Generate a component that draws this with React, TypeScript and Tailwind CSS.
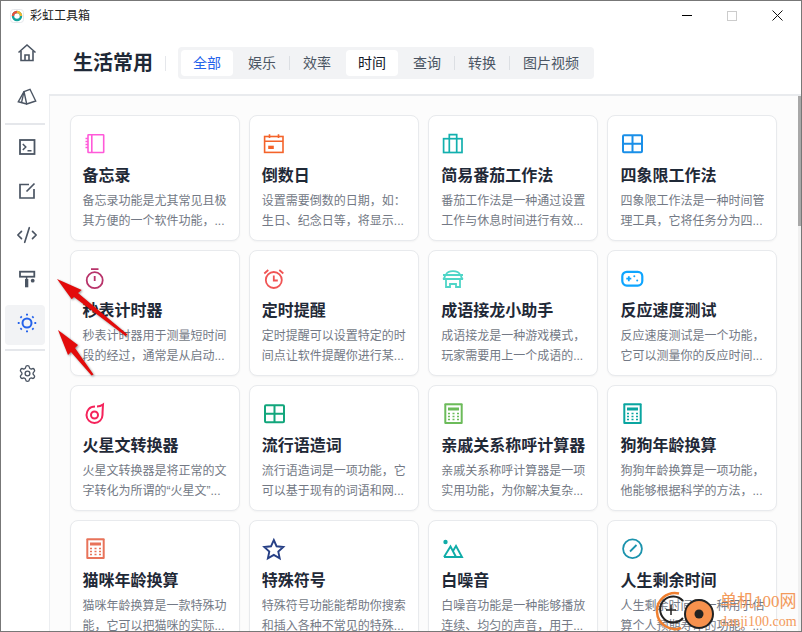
import { CodeXml, Settings } from "lucide-react";
import type { ReactNode } from "react";

const tabs = ["全部", "娱乐", "效率", "时间", "查询", "转换", "图片视频"];

function Calc({ c }: { c: string }) {
  return (
    <svg width="24" height="24" viewBox="0 0 24 24" fill="none">
      <rect x="3.300" y="1.300" width="18.400" height="20.700" rx="1" fill={c} />
      <rect x="5.300" y="3.300" width="14.400" height="16.700" fill="#fff" />
      <rect x="7" y="5.500" width="11" height="3" fill={c} />
      <path d="M7 11.500h2M11.500 11.500h2M16 11.500h2M7 14.500h2M11.500 14.500h2M16 14.500h2M7 17.500h2M11.500 17.500h2M16 17.500h2" stroke={c} strokeWidth="1.600" />
    </svg>
  );
}

function Grid({ c }: { c: string }) {
  return (
    <svg width="24" height="24" viewBox="0 0 24 24" fill="none" stroke={c} strokeWidth="2">
      <rect x="3" y="3.200" width="19" height="17" rx="1" />
      <path d="M3 11.700h19M12.500 3.200v17" />
    </svg>
  );
}

const cards: { title: string; desc: string; icon: ReactNode }[] = [
  {
    title: "备忘录",
    desc: "备忘录功能是尤其常见且极其方便的一个软件功能，...",
    icon: (
      <svg width="24" height="24" viewBox="0 0 24 24" fill="none" stroke="#ff5ad9" strokeWidth="1.600">
        <rect x="5" y="2.800" width="15.700" height="17.700" rx="0.500" />
        <path d="M8.800 2.800v17.700M2.500 6.500H5M2.500 9.500H5M2.500 12.500H5M2.500 15.500H5" />
      </svg>
    ),
  },
  {
    title: "倒数日",
    desc: "设置需要倒数的日期，如：生日、纪念日等，将显示...",
    icon: (
      <svg width="24" height="24" viewBox="0 0 24 24" fill="none" stroke="#f4632a" strokeWidth="1.600">
        <rect x="2.600" y="4.500" width="18.400" height="15.900" />
        <path d="M2.600 9.300H21M7.500 2.300V6M16.500 2.300V6" />
        <rect x="6.200" y="13.700" width="5.600" height="3.300" fill="#f4632a" stroke="none" />
      </svg>
    ),
  },
  {
    title: "简易番茄工作法",
    desc: "番茄工作法是一种通过设置工作与休息时间进行有效...",
    icon: (
      <svg width="24" height="24" viewBox="0 0 24 24" fill="none" stroke="#13b0ae" strokeWidth="1.700">
        <rect x="2.600" y="6.700" width="18.400" height="13.800" />
        <path d="M8.300 20.500V2.700h7.400v17.800" />
      </svg>
    ),
  },
  {
    title: "四象限工作法",
    desc: "四象限工作法是一种时间管理工具，它将任务分为四...",
    icon: <Grid c="#1a8fe8" />,
  },
  {
    title: "秒表计时器",
    desc: "秒表计时器用于测量短时间段的经过，通常是从启动...",
    icon: (
      <svg width="24" height="24" viewBox="0 0 24 24" fill="none" stroke="#b8336a" strokeWidth="1.800">
        <circle cx="11.700" cy="13.200" r="8" />
        <path d="M8 2.200h7.500M11.700 9v5" />
      </svg>
    ),
  },
  {
    title: "定时提醒",
    desc: "定时提醒可以设置特定的时间点让软件提醒你进行某...",
    icon: (
      <svg width="24" height="24" viewBox="0 0 24 24" fill="none" stroke="#f05454" strokeWidth="1.800">
        <circle cx="11.800" cy="13" r="8" />
        <path d="M11.800 8.500V13.500H15.800M2.300 6.500L6.300 3M21.300 6.500L17.300 3" />
      </svg>
    ),
  },
  {
    title: "成语接龙小助手",
    desc: "成语接龙是一种游戏模式，玩家需要用上一个成语的...",
    icon: (
      <svg width="24" height="24" viewBox="0 0 24 24" fill="none" stroke="#4fd5c7" strokeWidth="1.800">
        <path d="M5 7.500C7 3 17 3 19 7.500M2 8h20M4 8c0 2-.5 3.500-2 4h20c-1.500-.5-2-2-2-4M5 12v8h4v-3h6v3h4v-8" />
      </svg>
    ),
  },
  {
    title: "反应速度测试",
    desc: "反应速度测试是一个功能，它可以测量你的反应时间...",
    icon: (
      <svg width="24" height="24" viewBox="0 0 24 24" fill="none" stroke="#0ea5ff" strokeWidth="2.200">
        <rect x="2.300" y="4.800" width="20" height="13.800" rx="4.500" />
        <path d="M6.300 11.700h5M8.800 9.200v5" strokeWidth="1.800" />
        <circle cx="14.300" cy="9.200" r="1" fill="#0ea5ff" stroke="none" />
        <circle cx="17.200" cy="13.500" r="1" fill="#0ea5ff" stroke="none" />
      </svg>
    ),
  },
  {
    title: "火星文转换器",
    desc: "火星文转换器是将正常的文字转化为所谓的“火星文”...",
    icon: (
      <svg width="24" height="24" viewBox="0 0 24 24" fill="none" stroke="#f5235b" strokeWidth="2">
        <path d="M12 4.500C6.500 4.500 3.500 8.500 3.500 13a8 8 0 0 0 16 0c0-3.500.3-7 .5-10.500-2 1.500-4 2-6 2" />
        <circle cx="11.500" cy="13" r="3.500" />
      </svg>
    ),
  },
  {
    title: "流行语造词",
    desc: "流行语造词是一项功能，它可以基于现有的词语和网...",
    icon: <Grid c="#12a67c" />,
  },
  {
    title: "亲戚关系称呼计算器",
    desc: "亲戚关系称呼计算器是一项实用功能，为你解决复杂...",
    icon: <Calc c="#6cbb5a" />,
  },
  {
    title: "狗狗年龄换算",
    desc: "狗狗年龄换算是一项功能，他能够根据科学的方法，...",
    icon: <Calc c="#0aa5a0" />,
  },
  {
    title: "猫咪年龄换算",
    desc: "猫咪年龄换算是一款特殊功能，它可以把猫咪的实际...",
    icon: <Calc c="#e8735a" />,
  },
  {
    title: "特殊符号",
    desc: "特殊符号功能能帮助你搜索和插入各种不常见的特殊...",
    icon: (
      <svg width="24" height="24" viewBox="0 0 24 24" fill="none" stroke="#263f85" strokeWidth="1.900">
        <path d="M11.800 3l2.800 6.300 6.700.7-5 4.600 1.400 6.700-5.900-3.400-5.900 3.400 1.400-6.700-5-4.600 6.700-.7z" />
      </svg>
    ),
  },
  {
    title: "白噪音",
    desc: "白噪音功能是一种能够播放连续、均匀的声音，用于...",
    icon: (
      <svg width="24" height="24" viewBox="0 0 24 24" fill="none" stroke="#10aca8" strokeWidth="1.900">
        <circle cx="4.500" cy="5" r="2.200" fill="#10aca8" stroke="none" />
        <path d="M3 20L9.500 9.500 15 20M3 20h18L15 9l-3.300 5.500" />
      </svg>
    ),
  },
  {
    title: "人生剩余时间",
    desc: "人生剩余时间是一种用于估算个人预期寿命的功能。...",
    icon: (
      <svg width="24" height="24" viewBox="0 0 24 24" fill="none" stroke="#1b93ad" strokeWidth="1.800">
        <circle cx="12.500" cy="11.700" r="9.400" />
        <path d="M10 14.500l6.500-6.500" />
      </svg>
    ),
  },
];

function SideItem({ children, active }: { children: ReactNode; active?: boolean }) {
  return (
    <div className={`flex h-10 items-center justify-center rounded pb-1 pl-1 ${active ? "bg-[#f2f3f5] text-[#2563eb]" : "text-[#4b5563]"}`}>
      {children}
    </div>
  );
}

export default function App() {
  return (
    <div className="relative flex h-[632px] w-[802px] flex-col overflow-hidden border border-[#777] bg-white font-['Liberation_Sans','Noto_Sans_CJK_SC',sans-serif] text-[#111827]">
      <div className="flex h-[29px] shrink-0 items-center">
        <svg className="ml-[9px]" width="14" height="14" viewBox="0 0 14 14" fill="none">
          <rect x="0.500" y="0.500" width="13" height="13" rx="3" fill="#fff" stroke="#e5e7eb" />
          <circle cx="7" cy="7" r="4" stroke="#10a39b" strokeWidth="2.400" />
          <path d="M3 7a4 4 0 0 1 4-4" stroke="#e8503a" strokeWidth="2.400" />
          <path d="M7 3a4 4 0 0 1 4 4" stroke="#f2b632" strokeWidth="2.400" />
        </svg>
        <span className="ml-[6px] text-xs text-[#222]">彩虹工具箱</span>
        <div className="ml-auto flex items-center pr-[18px]">
          <span className="h-px w-[10px] bg-black" />
          <span className="ml-[35px] h-[10px] w-[10px] border border-[#ccc]" />
          <svg className="ml-[35px]" width="11" height="11" viewBox="0 0 11 11" stroke="#111" strokeWidth="1">
            <path d="M.5.500l10 10M10.500.500l-10 10" />
          </svg>
        </div>
      </div>
      <div className="flex min-h-0 flex-1">
        <aside className="flex w-[48px] shrink-0 flex-col gap-1 px-1 pt-[5px]">
          <SideItem>
            <svg width="20" height="20" viewBox="0 0 20 20" fill="none" stroke="currentColor" strokeWidth="1.600">
              <path d="M1.500 9.500L10 2l8.500 7.500" />
              <path d="M4 8v9.500h12V8M8 17.500V12h4v5.500" />
            </svg>
          </SideItem>
          <SideItem>
            <svg width="20" height="20" viewBox="0 0 20 20" fill="none" stroke="currentColor" strokeWidth="1.400">
              <path d="M7 4.700l6-2.400L18.700 14l-9 3z" />
              <path d="M7 4.700L1.300 14.700l8.400 2.300" />
              <path d="M7 4.700l-2.500 11" />
            </svg>
          </SideItem>
          <div className="h-[2px] shrink-0 bg-[#e5e7eb]" />
          <SideItem>
            <svg width="20" height="20" viewBox="0 0 20 20" fill="none" stroke="currentColor" strokeWidth="1.800">
              <rect x="3" y="3" width="14.500" height="14" />
              <path d="M5.800 7l3 3-3 3M10.500 13.800h4" strokeWidth="1.500" />
            </svg>
          </SideItem>
          <SideItem>
            <svg width="20" height="20" viewBox="0 0 20 20" fill="none" stroke="currentColor" strokeWidth="1.700">
              <path d="M12 3.500H3v13.500h14V8" />
              <path d="M9.500 10.500L17.500 2.500" />
            </svg>
          </SideItem>
          <SideItem><CodeXml size={22} strokeWidth={1.800} /></SideItem>
          <SideItem>
            <svg width="20" height="20" viewBox="0 0 20 20" fill="currentColor" stroke="currentColor">
              <rect x="3" y="2.700" width="14.300" height="5" fill="none" strokeWidth="1.800" />
              <path d="M9.600 8v2" fill="none" strokeWidth="1.500" />
              <rect x="8" y="10" width="3.300" height="8.300" stroke="none" />
              <circle cx="15.700" cy="11.700" r="1.900" stroke="none" />
            </svg>
          </SideItem>
          <SideItem active>
            <svg width="22" height="22" viewBox="0 0 22 22" fill="none" stroke="currentColor" strokeWidth="2">
              <circle cx="11" cy="11" r="4.500" />
              <path d="M11 1.800v1.800M11 18.400v1.800M1.800 11h1.800M18.400 11h1.800M4.500 4.500l1.200 1.200M16.300 16.300l1.200 1.200M4.500 17.500l1.200-1.200M16.300 5.700l1.200-1.200" />
            </svg>
          </SideItem>
          <div className="h-[2px] shrink-0 bg-[#e5e7eb]" />
          <SideItem><Settings size={19} strokeWidth={1.700} /></SideItem>
        </aside>
        <main className="flex min-w-0 flex-1 flex-col">
          <header className="flex h-[66px] shrink-0 items-center border-b-2 border-[#e9ebee] pl-[24px] pt-[2px]">
            <h1 className="text-xl font-bold text-[#1f2937]">生活常用</h1>
            <span className="ml-[12px] h-[15px] w-px bg-[#e5e7eb]" />
            <nav className="ml-[12px] flex h-8 items-center rounded bg-[#f2f3f5] p-[3px]">
              {tabs.map((t, i) => (
                <div key={t} className="flex items-center">
                  {i > 0 && (
                    <span className="flex w-[3px] justify-center">
                      {(i === 2 || i === 5 || i === 6) && <span className="h-[14px] w-px bg-[#dcdfe3]" />}
                    </span>
                  )}
                  <span
                    className={`rounded px-3 text-sm leading-[26px] ${
                      i === 0 ? "bg-white text-[#2563eb]" : i === 3 ? "bg-white text-[#111827]" : "text-[#4b5563]"
                    }`}
                  >
                    {t}
                  </span>
                </div>
              ))}
            </nav>
          </header>
          <div className="relative min-h-0 flex-1 overflow-hidden border-l border-[#eceef1] bg-[#fcfcfc] pl-[19.500px] pt-[19px]">
            <div className="grid grid-cols-[repeat(4,170px)] gap-x-[9.330px] gap-y-[9px]">
              {cards.map((c) => (
                <div key={c.title} className="h-[126px] rounded-lg border border-[#e8eaed] bg-white px-3 pt-4 shadow-[0_1px_2px_rgba(0,0,0,0.04)]">
                  <div className="h-6">{c.icon}</div>
                  <h2 className="mt-2 text-base leading-6 font-bold text-[#1f2937]">{c.title}</h2>
                  <p className="mt-[3px] text-xs leading-5 text-[#737985]">{c.desc}</p>
                </div>
              ))}
            </div>
            <div className="absolute inset-y-0 right-0 w-[3px] bg-[#f0f0f0]">
              <div className="h-[130px] bg-[#a8a8a8]" />
            </div>
          </div>
        </main>
      </div>

      {/* annotation arrows */}
      <svg className="absolute left-[-1px] top-[-1px] drop-shadow-[1px_1px_1px_rgba(0,0,0,0.4)]" width="802" height="632" viewBox="0 0 802 632" fill="none">
        <path d="M57 279L81.700 290L78 293L127.500 334.500L125.500 336L74 297L71.700 299.300z" fill="#e30b0b" />
        <path d="M58 330L78 345L75 348L93.500 374.500L91.500 375.500L71 352L68 355z" fill="#e30b0b" />
      </svg>

      {/* watermark */}
      <div className="absolute bottom-0 right-0 h-[50px] w-[150px] text-[#f39a5b]">
        <svg className="absolute left-0 top-[2px]" width="84" height="48" viewBox="0 0 84 48" fill="none">
          <path d="M28 10.500A18 18 0 1 0 30 45" stroke="#f08030" strokeWidth="2.500" />
          <path d="M32 18A13 13 0 1 0 32 35" stroke="#222" strokeWidth="2" />
          <path d="M15 27h10M20 22v10" stroke="#222" strokeWidth="1.500" />
          <circle cx="48" cy="31" r="14" fill="#f7914d" stroke="#222" strokeWidth="2" />
          <circle cx="48" cy="31" r="4.500" fill="#222" />
        </svg>
        <div className="absolute left-[69px] top-[9px] whitespace-nowrap font-['Liberation_Serif','Noto_Sans_CJK_SC',serif] text-[17px] leading-6">单机100网</div>
        <div className="absolute left-[69px] top-[31px] whitespace-nowrap font-['Liberation_Serif',serif] text-sm leading-5">danji100.com</div>
      </div>
    </div>
  );
}
